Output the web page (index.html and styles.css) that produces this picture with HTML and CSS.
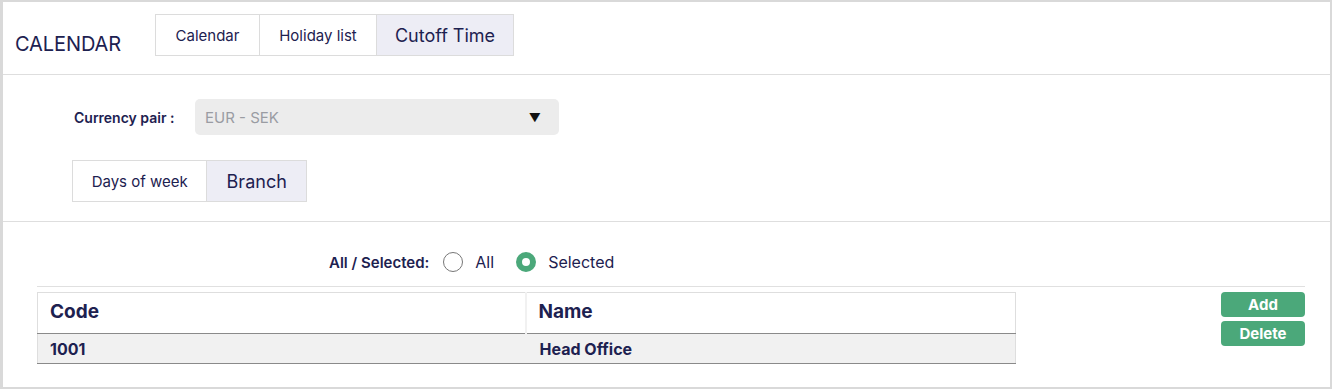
FILE: index.html
```html
<!DOCTYPE html>
<html>
<head>
<meta charset="utf-8">
<link rel="stylesheet" href="styles.css">
</head>
<body>
<div class="frame">
  <header class="top">
    <div class="title">CALENDAR</div>
    <nav class="tabs">
      <div class="tab tab-cal">Calendar</div>
      <div class="tab tab-hol">Holiday list</div>
      <div class="tab tab-cut active">Cutoff Time</div>
    </nav>
  </header>
  <section class="settings">
    <div class="pair-row">
      <span class="pair-label">Currency pair :</span>
      <div class="select">
        <span class="select-value">EUR - SEK</span>
        <span class="select-arrow">▼</span>
      </div>
    </div>
    <nav class="tabs subtabs">
      <div class="tab tab-days">Days of week</div>
      <div class="tab tab-branch active">Branch</div>
    </nav>
  </section>
  <section class="branch">
    <div class="filter">
      <span class="filter-label">All / Selected:</span>
      <label class="radio"><span class="dot"></span><span>All</span></label>
      <label class="radio checked"><span class="dot"></span><span>Selected</span></label>
    </div>
    <div class="content">
      <table class="grid">
        <thead>
          <tr><th class="col-code">Code</th><th class="col-name">Name</th></tr>
        </thead>
        <tbody>
          <tr><td>1001</td><td class="name-cell">Head Office</td></tr>
        </tbody>
      </table>
      <div class="actions">
        <button class="btn">Add</button>
        <button class="btn">Delete</button>
      </div>
    </div>
  </section>
</div>
</body>
</html>
```

FILE: styles.css
```css
* { box-sizing: border-box; }
html, body { margin: 0; padding: 0; background: #fff; }
body {
  font-family: Inter, "Liberation Sans", Arial, sans-serif;
  color: #1d2150;
}
.frame {
  width: 1332px;
  height: 389px;
  border-style: solid;
  border-color: #d9d9d9;
  border-width: 2px 2px 2px 3px;
  overflow: hidden;
}
.top {
  display: flex;
  align-items: flex-start;
  padding: 12px 0 18px 12px;
  border-bottom: 1px solid #dedede;
}
.title {
  width: 140px;
  padding-top: 18px;
  font-size: 20px;
  line-height: 24px;
  letter-spacing: -0.1px;
}
.tabs {
  display: flex;
  border: 1px solid #dcdcdc;
  height: 42px;
}
.tab {
  display: flex;
  align-items: center;
  justify-content: center;
  font-size: 15px;
  color: #1d2150;
  background: #fff;
  border-left: 1px solid #dcdcdc;
}
.tab:first-child { border-left: none; }
.tab.active {
  background: #ededf5;
  font-size: 18px;
}
.tab-cal { width: 103px; }
.tab-hol { width: 117px; }
.tab-cut { width: 137px; }

.settings {
  padding: 24px 0 19px 69px;
  border-bottom: 1px solid #dedede;
}
.pair-row {
  display: flex;
  align-items: center;
  height: 36px;
  padding-left: 2px;
}
.pair-label {
  width: 121px;
  font-size: 14px;
  font-weight: 600;
}
.select {
  width: 364px;
  height: 36px;
  background: #ececec;
  border-radius: 5px;
  display: flex;
  align-items: center;
  justify-content: space-between;
  padding: 0 18px 0 10px;
}
.select-value {
  font-size: 15px;
  color: #9a9ca3;
}
.select-arrow {
  font-size: 12px;
  color: #111;
}
.subtabs {
  margin-top: 25px;
  width: 235px;
}
.tab-days { width: 134px; }
.tab-branch { width: 100px; font-size: 17px; }

.branch {
  padding: 0 25px 0 34px;
}
.filter {
  display: flex;
  align-items: center;
  height: 65px;
  padding: 28px 0 12px 292px;
  border-bottom: 1px solid #e0e0e0;
}
.filter-label {
  font-size: 15px;
  font-weight: 600;
  margin-right: 14px;
}
.radio {
  display: flex;
  align-items: center;
  font-size: 16px;
  margin-right: 22px;
}
.dot {
  width: 20px;
  height: 20px;
  border-radius: 50%;
  border: 1px solid #777;
  margin-right: 12px;
  background: #fff;
}
.radio.checked .dot {
  border: 6px solid #4ba87a;
  background: #fff;
}
.content {
  display: flex;
  justify-content: space-between;
  margin-top: 5px;
}
.grid {
  width: 979px;
  border-collapse: collapse;
  border: 1px solid #dedede;
  border-bottom: none;
}
.grid th {
  text-align: left;
  font-size: 19px;
  font-weight: 700;
  height: 41px;
  padding: 0 12px 3px;
  background: #fff;
  border-bottom: 1px solid #8a8a8a;
}
.grid th.col-name {
  border-left: 2px solid #f1f1f1;
}
.col-code { width: 488px; }
.grid td {
  background: #f1f1f1;
  font-size: 16px;
  font-weight: 700;
  height: 30px;
  padding: 0 12px;
  border-bottom: 1px solid #8a8a8a;
}
.grid td.name-cell { padding-left: 14px; }
.actions {
  display: flex;
  flex-direction: column;
  gap: 4px;
  width: 84px;
}
.btn {
  height: 25px;
  border: none;
  border-radius: 4px;
  background: #4ba87a;
  color: #fff;
  font-family: Inter, "Liberation Sans", Arial, sans-serif;
  font-size: 15px;
  font-weight: 700;
  padding: 0;
}
```
